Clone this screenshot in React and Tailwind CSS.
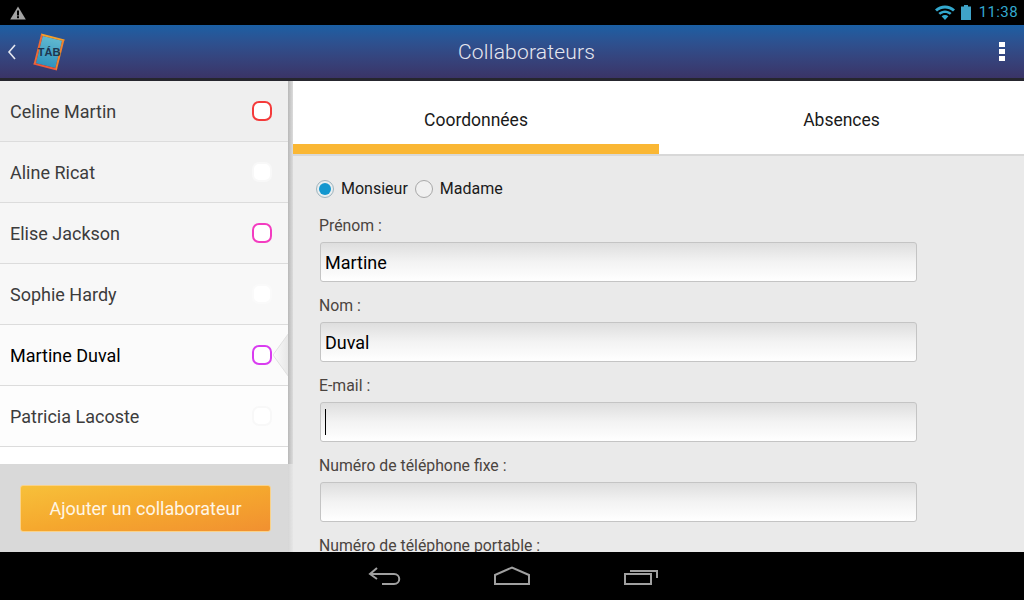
import React from "react";

const people = [
  { n: "Celine Martin", c: "border-[#f43a3a]", bg: "bg-[#efefef]" },
  { n: "Aline Ricat", c: "border-[#f8f8f8]", bg: "bg-[#f3f3f3]" },
  { n: "Elise Jackson", c: "border-[#f33cc0]", bg: "bg-[#f6f6f6]" },
  { n: "Sophie Hardy", c: "border-[#fafafa]", bg: "bg-[#f8f8f8]" },
  { n: "Martine Duval", c: "border-[#d93cf0]", bg: "bg-[#fbfbfb]", active: true },
  { n: "Patricia Lacoste", c: "border-[#f8f8f8]", bg: "bg-[#fdfdfd]" },
];

function Field({ label, value, caret }) {
  return (
    <div className="flex flex-col">
      <div className="h-[20px] pl-[26px] text-[15.8px] leading-[20px] text-[#4a4440]">{label}</div>
      <div className="ml-[27px] mt-[6px] mb-[14px] flex h-[40px] w-[597px] items-center rounded-[3px] border border-[#c4c4c4] bg-gradient-to-b from-[#dedede] via-[#f3f3f3] to-white pl-[4px] text-[18px] text-black">
        {value}
        {caret && <span className="h-[26px] w-px bg-black" />}
      </div>
    </div>
  );
}

function Radio({ on }) {
  return (
    <span className={`flex h-[18px] w-[18px] items-center justify-center rounded-full border ${on ? "border-[#9fb4bd] bg-[#e8eef0]" : "border-[#a8a8a8] bg-[#f0f0f0]"}`}>
      {on && <span className="h-[12px] w-[12px] rounded-full bg-[#1297cf]" />}
    </span>
  );
}

export default function App() {
  return (
    <div className="flex h-[600px] w-[1024px] flex-col overflow-hidden bg-black font-['Roboto',sans-serif]">
      <div className="flex h-[25px] items-center justify-between bg-black pl-[10px] pr-[6px]">
        <svg width="16" height="14" viewBox="0 0 16 14">
          <path d="M8 0.5 L15.8 13.5 H0.2 Z" fill="#a3a3a3" />
          <rect x="7" y="4.5" width="2" height="5" fill="#000" />
          <rect x="7" y="10.2" width="2" height="2" fill="#000" />
        </svg>
        <div className="flex items-center">
          <svg width="20" height="15" viewBox="0 0 20 15" className="mr-[6px]">
            <path d="M0 4.5 C5.5 -0.7 14.5 -0.7 20 4.5 L18 6.6 C13.5 2.4 6.5 2.4 2 6.6 Z" fill="#33a9cf" />
            <path d="M3.4 8 C7.2 4.5 12.8 4.5 16.6 8 L14.8 9.8 C12 7.3 8 7.3 5.2 9.8 Z" fill="#33a9cf" />
            <path d="M6.6 11.2 C8.6 9.5 11.4 9.5 13.4 11.2 L10 15 Z" fill="#33a9cf" />
          </svg>
          <svg width="10" height="15" viewBox="0 0 10 15" className="mr-[8px]">
            <path d="M3 0 H7 V1.5 H10 V15 H0 V1.5 H3 Z" fill="#3fa3c8" />
          </svg>
          <span className="text-[15px] leading-none tracking-[0.4px] text-[#33a9cf]">11:38</span>
        </div>
      </div>

      <div className="relative flex h-[56px] items-center justify-between border-b-[3px] border-[#26262e] bg-gradient-to-b from-[#1a5fa4] to-[#3a3467] pl-[7px]">
        <div className="flex items-center">
          <svg width="9" height="16" viewBox="0 0 9 16">
            <path d="M8 1 L2 8 L8 15" fill="none" stroke="#e4e8f0" strokeWidth="1.6" />
          </svg>
          <div className="ml-[21px] flex h-[32px] w-[24px] rotate-[14deg] items-center justify-center border-2 border-b-[#ee5a3a] border-l-[#ee6a35] border-r-[#f0832f] border-t-[#f5a02a] bg-gradient-to-b from-[#5fb8d0] to-[#2f93bd] text-[11px] font-bold leading-none text-[#1d3550]">
            <span className="-rotate-[14deg] font-['Liberation_Sans',sans-serif]">TÁB</span>
          </div>
        </div>
        <div className="absolute left-[458px] top-[13px] text-[21px] font-light leading-[28px] tracking-[0.2px] text-[#e6e8f0]">Collaborateurs</div>
        <div className="mr-[19px] flex flex-col gap-[1.5px]">
          <span className="h-[5.5px] w-[6px] bg-white" />
          <span className="h-[5.5px] w-[6px] bg-white" />
          <span className="h-[5.5px] w-[6px] bg-white" />
        </div>
      </div>

      <div className="relative flex h-[471px] bg-[#eaeaea]">
        <div className="flex w-[288px] flex-col bg-white">
          <div className="flex-1">
            {people.map((p) => (
              <div key={p.n} className={`flex h-[61px] items-center justify-between border-b border-[#dcdcdc] pl-[10px] pr-[16px] text-[18px] ${p.bg} ${p.active ? "text-black" : "text-[#3c3c3c]"}`}>
                <span>{p.n}</span>
                <span className={`h-[20px] w-[20px] rounded-[7px] border-2 bg-white ${p.c}`} />
              </div>
            ))}
          </div>
          <div className="flex h-[88px] items-center justify-center bg-[#d9d9d9] pl-[3px]">
            <button className="flex h-[47px] w-[251px] items-center justify-center rounded-[3px] border border-[#f9d28a] bg-gradient-to-br from-[#f7c03a] via-[#f5a82e] to-[#f19030] text-[18px] text-[#fff6e6]">
              Ajouter un collaborateur
            </button>
          </div>
        </div>

        <svg width="18" height="50" viewBox="0 0 18 50" className="absolute left-[273px] top-[249px]">
          <defs>
            <linearGradient id="tip" x1="0" x2="1" y1="0" y2="0">
              <stop offset="0" stopColor="#fbfbfb" />
              <stop offset="1" stopColor="#e4e4e4" />
            </linearGradient>
          </defs>
          <path d="M18 0 L0 25 L18 50 Z" fill="url(#tip)" />
          <path d="M18 0 L0 25 L18 50" fill="none" stroke="#e0e0e0" strokeWidth="1" />
        </svg>

        <div className="relative z-10 flex w-[5px] flex-col">
          <div className="flex-1 bg-gradient-to-r from-[#b8b8b8] to-[#dcdcdc]" />
          <div className="h-[88px] bg-gradient-to-r from-[#d6d6d6] to-[#e6e6e6]" />
        </div>

        <div className="flex flex-1 flex-col overflow-hidden">
          <div className="flex h-[75px] border-b-2 border-[#d8d8d8] bg-white text-[17.5px] text-[#1a1a1a]">
            <div className="flex w-[366px] items-center justify-center border-b-[10px] border-[#fab734] pt-[16px]">Coordonnées</div>
            <div className="flex flex-1 items-center justify-center pt-[5px]">Absences</div>
          </div>
          <div className="flex h-[396px] flex-col overflow-hidden">
            <div className="mt-[23px] mb-[17px] flex h-[20px] items-center pl-[23px] text-[16px] text-[#1a1a1a]">
              <Radio on />
              <span className="ml-[7px]">Monsieur</span>
              <span className="ml-[7px]"><Radio /></span>
              <span className="ml-[7px]">Madame</span>
            </div>
            <Field label="Prénom :" value="Martine" />
            <Field label="Nom :" value="Duval" />
            <Field label="E-mail :" value="" caret />
            <Field label="Numéro de téléphone fixe :" value="" />
            <Field label="Numéro de téléphone portable :" value="" />
          </div>
        </div>
      </div>

      <div className="flex h-[48px] items-center justify-center bg-black pl-[2px]">
        <svg width="34" height="20" viewBox="0 0 34 20" className="mr-[92px]">
          <path d="M9 2 L2 8 L9 13 M2 8 H26 C33 8 33 18 26 18 H14" fill="none" stroke="#a0a0a0" strokeWidth="2" />
        </svg>
        <svg width="36" height="20" viewBox="0 0 36 20" className="mr-[94px]">
          <path d="M1 9 L18 1.5 L35 9 V18 H1 Z" fill="none" stroke="#a0a0a0" strokeWidth="2" />
        </svg>
        <svg width="34" height="18" viewBox="0 0 34 18">
          <path d="M1 7 H27 V17 H1 Z" fill="none" stroke="#a0a0a0" strokeWidth="2" />
          <path d="M6 4 H33 V11" fill="none" stroke="#a0a0a0" strokeWidth="2" />
        </svg>
      </div>
    </div>
  );
}
